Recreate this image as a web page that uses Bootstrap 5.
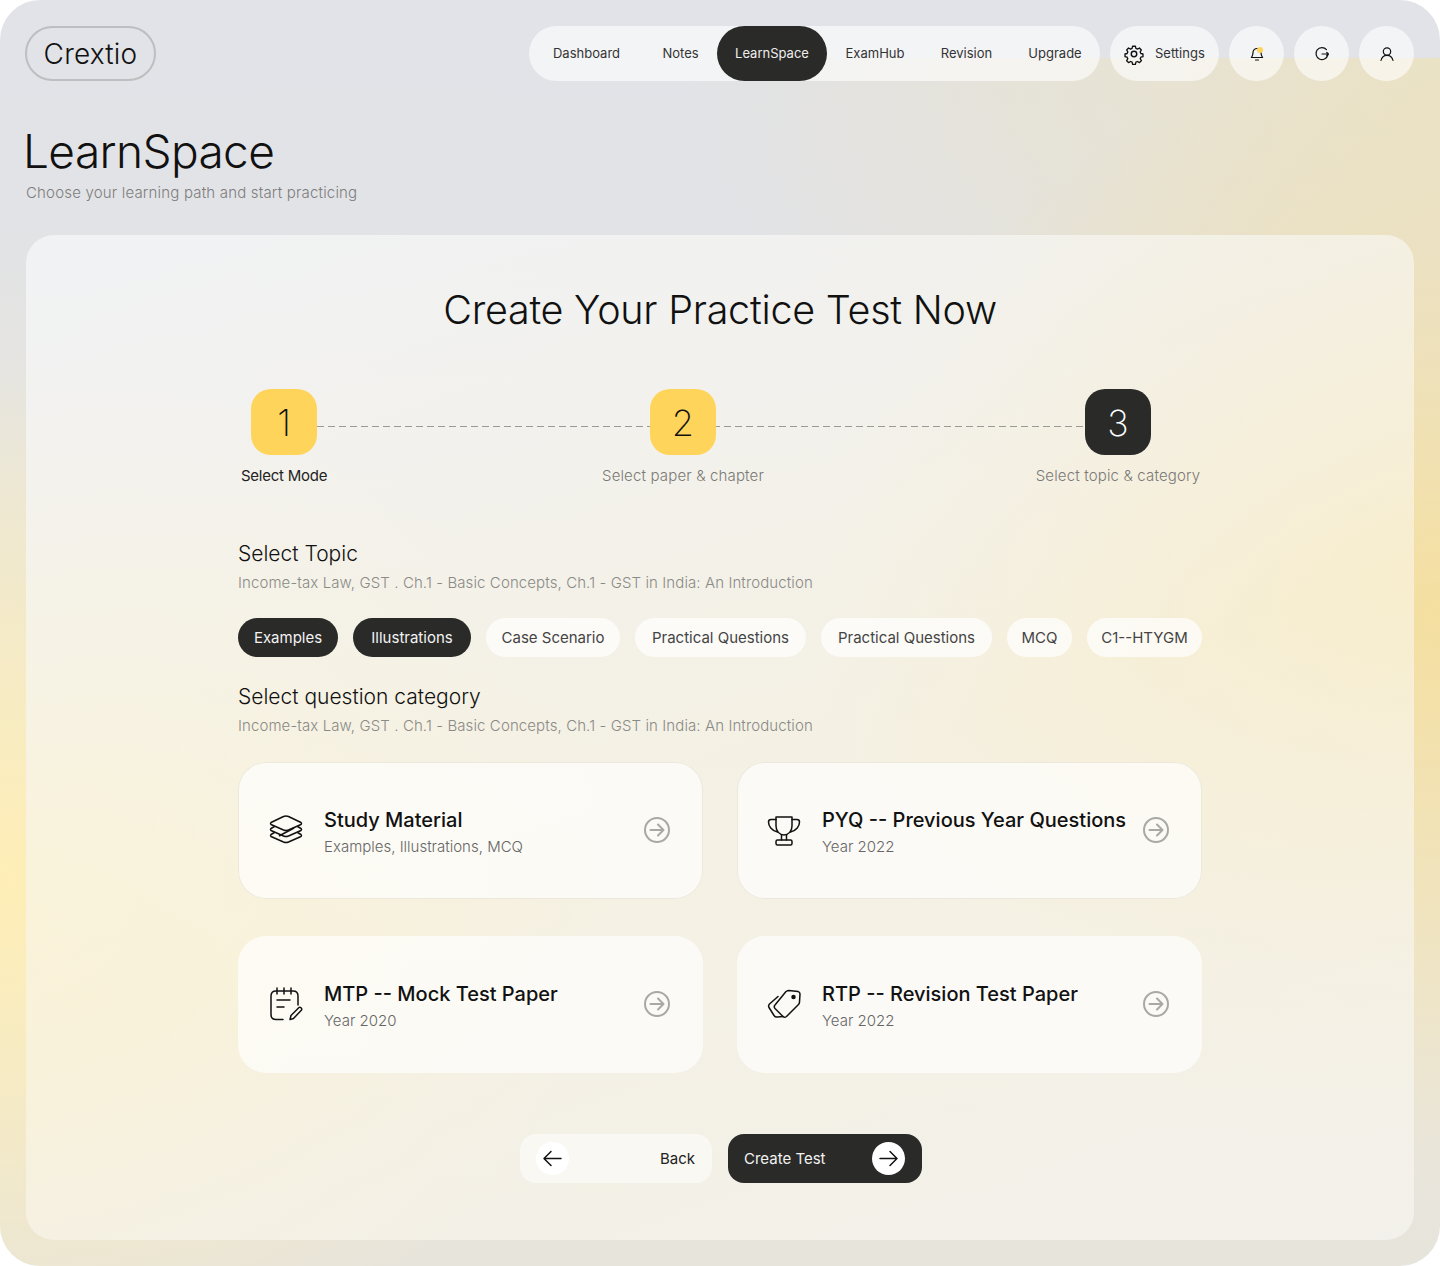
<!DOCTYPE html>
<html lang="en">
<head>
  <meta charset="UTF-8">
  <title>Crextio LearnSpace</title>
  <meta name="viewport" content="width=device-width, initial-scale=1">
  <link href="https://cdn.jsdelivr.net/npm/bootstrap@5.3.3/dist/css/bootstrap.min.css" rel="stylesheet">
  <style>
    body {
      background-color: #fff;
      font-family: "Inter", "Noto Sans", sans-serif;
      color: #111;
    }
    .app-frame {
      position: relative;
      height: 1266px;
      border-radius: 40px;
      overflow: hidden;
      padding: 26px 26px 26px 25px;
      background: linear-gradient(180deg, #e1e3e8 0, #e2e3e6 18%, #e9e6dc 42%, #ece8da 70%, #e7e4dc 100%);
    }
    .app-frame::before {
      content: "";
      position: absolute;
      inset: 58px 0 0 0;
      background:
        radial-gradient(ellipse 620px 560px at 100% 46%, rgba(247, 222, 150, .85) 0, rgba(247, 222, 150, 0) 100%),
        radial-gradient(ellipse 620px 520px at 0 68%, rgba(255, 238, 180, .95) 0, rgba(255, 238, 180, 0) 100%),
        radial-gradient(ellipse 760px 420px at 100% 0, rgba(235, 226, 196, .95) 0, rgba(235, 226, 196, 0) 100%);
    }
    .app-frame > * { position: relative; }
    .top-bar { gap: 10px; }
    .logo-pill {
      width: 131px;
      height: 55px;
      border: 2px solid #bdbebf;
      border-radius: 28px;
      font-size: 28px;
      font-weight: 300;
      letter-spacing: .2px;
    }
    .top-pill {
      height: 55px;
      border-radius: 28px;
      background: rgba(255, 255, 255, .6);
      font-size: 13px;
      color: #333;
    }
    .main-menu { width: 571px; }
    .main-menu a {
      height: 55px;
      border-radius: 28px;
      padding-top: 1px;
      color: #333;
      text-decoration: none;
    }
    .main-menu a:nth-child(1) { width: 115px; }
    .main-menu a:nth-child(2) { width: 73px; }
    .main-menu a:nth-child(3) { width: 110px; background: #2a2a28; color: #eee; }
    .main-menu a:nth-child(4) { width: 96px; }
    .main-menu a:nth-child(5) { width: 87px; }
    .main-menu a:nth-child(6) { width: 90px; }
    .settings-pill { width: 109px; padding-left: 13px; gap: 10px; }
    .round-pill { width: 55px; }
    .bell-dot {
      position: absolute;
      top: 21px;
      left: 28px;
      width: 6px;
      height: 6px;
      border-radius: 50%;
      background: #ffd45a;
    }
    .page-title {
      font-size: 46px;
      font-weight: 300;
      line-height: 56px;
      margin: 42px 0 0 -2px;
      letter-spacing: -.6px;
    }
    .page-sub { font-size: 15px; color: #7d7d7d; margin: 3px 0 0 1px; line-height: 22px; font-weight: 300; letter-spacing: .18px; }
    .practice-panel {
      height: 1005px;
      margin: 31px 0 0 1px;
      border-radius: 28px;
      padding-top: 50px;
      background: linear-gradient(160deg, rgba(244, 245, 247, .85) 0, rgba(250, 246, 232, .62) 55%, rgba(244, 242, 236, .9) 100%);
    }
    .panel-title { font-size: 39.500px; font-weight: 300; line-height: 50px; margin: 0; text-align: center; letter-spacing: -.25px; }
    .panel-body { width: 964px; margin: 0 auto; }
    .stepper { position: relative; margin-top: 54px; padding-left: 3px; }
    .stepper-line {
      position: absolute;
      left: 79px;
      right: 51px;
      top: 37px;
      height: 1px;
      background: repeating-linear-gradient(90deg, #9a9a96 0 7px, transparent 7px 11px);
    }
    .step-item { position: relative; text-align: center; font-size: 15px; color: #7a7a76; font-weight: 300; white-space: nowrap; letter-spacing: .15px; }
    .step-one { width: 86px; color: #222; font-weight: 400; letter-spacing: -.25px; }
    .step-two { width: 162px; margin-left: 275px; }
    .step-three { width: 168px; margin-left: 270px; }
    .step-box {
      width: 66px;
      height: 66px;
      margin: 0 auto 10px;
      padding-top: 2px;
      border-radius: 20px;
      background: #ffd45a;
      color: #111;
      font-size: 36px;
      font-weight: 200;
    }
    .step-three .step-box { background: #2a2a28; color: #fff; }
    .section-title { font-size: 21px; font-weight: 300; line-height: 28px; margin: 0; color: #111; }
    .section-sub { font-size: 15px; font-weight: 300; color: #8a8a86; line-height: 22px; margin: 4px 0 0; letter-spacing: .1px; }
    .topic-title { margin-top: 52px; }
    .chip-row { margin-top: 24px; }
    .topic-chip {
      height: 39px;
      padding-top: 2px;
      border-radius: 20px;
      background: rgba(255, 255, 255, .7);
      color: #444;
      font-size: 15px;
      white-space: nowrap;
    }
    .chip-row .topic-chip:nth-child(1) { width: 100px; }
    .chip-row .topic-chip:nth-child(2) { width: 118px; }
    .chip-row .topic-chip:nth-child(3) { width: 134px; }
    .chip-row .topic-chip:nth-child(4) { width: 171px; }
    .chip-row .topic-chip:nth-child(5) { width: 171px; }
    .chip-row .topic-chip:nth-child(6) { width: 65px; }
    .chip-row .topic-chip:nth-child(7) { width: 115px; }
    .chip-row .chip-on { background: #2a2a28; color: #f3f3f3; }
    .category-title { margin-top: 26px; }
    .category-grid {
      display: grid;
      grid-template-columns: 465px 465px;
      gap: 37px 34px;
      margin-top: 25px;
    }
    .category-card {
      height: 137px;
      border-radius: 28px;
      padding: 0 31px 0 30px;
      background: rgba(255, 255, 255, .66);
    }
    .category-card:nth-child(even) { padding-left: 29px; }
    .card-line { box-shadow: inset 0 0 0 1px #ece8dc; }
    .category-icon { width: 36px; height: 36px; flex: none; margin-right: 20px; }
    .category-text { padding-top: 3px; }
    .category-name { font-size: 20px; font-weight: 500; line-height: 28px; white-space: nowrap; }
    .category-note { font-size: 15px; font-weight: 300; color: #666; line-height: 22px; margin-top: 2px; }
    .go-icon { width: 30px; height: 30px; flex: none; }
    .action-row { margin-top: 61px; gap: 16px; padding-left: 2px; }
    .action-btn {
      height: 49px;
      border-radius: 16px;
      padding: 0 17px 0 16px;
      font-size: 15px;
      text-decoration: none;
    }
    .btn-back { width: 192px; background: rgba(255, 255, 255, .5); color: #222; }
    .btn-next { width: 194px; background: #2a2a28; color: #f2f2f2; }
    .action-btn span:not(.btn-ball) { padding-top: 2px; }
    .btn-ball {
      width: 33px;
      height: 33px;
      border-radius: 50%;
      background: #fff;
    }
  </style>
</head>
<body>
  <div class="app-frame">
    <header class="top-bar d-flex align-items-center">
      <div class="logo-pill d-flex align-items-center justify-content-center">Crextio</div>
      <nav class="top-pill main-menu d-flex align-items-center ms-auto">
        <a href="#" class="d-flex align-items-center justify-content-center">Dashboard</a>
        <a href="#" class="d-flex align-items-center justify-content-center">Notes</a>
        <a href="#" class="d-flex align-items-center justify-content-center">LearnSpace</a>
        <a href="#" class="d-flex align-items-center justify-content-center">ExamHub</a>
        <a href="#" class="d-flex align-items-center justify-content-center">Revision</a>
        <a href="#" class="d-flex align-items-center justify-content-center">Upgrade</a>
      </nav>
      <div class="top-pill settings-pill d-flex align-items-center">
        <svg width="22" height="22" viewBox="0 0 24 24" fill="none" stroke="#111" stroke-width="1.6" stroke-linejoin="round"><circle cx="12" cy="12" r="3"/><path d="M10.300 2.600h3.400l.6 2.700 1.900.8 2.400-1.400 2.300 2.400-1.400 2.400.8 1.900 2.600.6v3.200l-2.600.7-.8 1.800 1.400 2.400-2.300 2.400-2.400-1.400-1.900.8-.6 2.600h-3.400l-.6-2.600-1.900-.8-2.400 1.400-2.300-2.400 1.400-2.400-.8-1.800-2.600-.7v-3.200l2.600-.6.8-1.900-1.400-2.400 2.300-2.400 2.400 1.400 1.900-.8z" transform="translate(1.200 1.200) scale(.9)"/></svg>
        <span>Settings</span>
      </div>
      <div class="top-pill round-pill position-relative d-flex align-items-center justify-content-center">
        <svg width="16" height="16" viewBox="0 0 16 16" fill="none" stroke="#111" stroke-width="1.2" stroke-linecap="round" stroke-linejoin="round"><path d="M4 6.500a4 4 0 0 1 8 0c0 3 1 4 1.600 5H2.400c.6-1 1.600-2 1.600-5z"/><path d="M6.500 14h3"/></svg>
        <span class="bell-dot"></span>
      </div>
      <div class="top-pill round-pill d-flex align-items-center justify-content-center">
        <svg width="16" height="16" viewBox="0 0 16 16" fill="none" stroke="#111" stroke-width="1.2" stroke-linecap="round" stroke-linejoin="round"><path d="M12.500 3.600A6 6 0 1 0 13.800 9"/><path d="M8 8h6.500M12.800 6.500 14.500 8l-1.700 1.500"/></svg>
      </div>
      <div class="top-pill round-pill d-flex align-items-center justify-content-center">
        <svg width="16" height="16" viewBox="0 0 16 16" fill="none" stroke="#111" stroke-width="1.2" stroke-linecap="round"><circle cx="8" cy="5.500" r="3.700"/><path d="M2 14.500c.6-3 3-5.200 6-5.200s5.400 2.200 6 5.200"/></svg>
      </div>
    </header>

    <h1 class="page-title">LearnSpace</h1>
    <p class="page-sub">Choose your learning path and start practicing</p>

    <main class="practice-panel">
      <h2 class="panel-title">Create Your Practice Test Now</h2>
      <div class="panel-body">
        <div class="stepper d-flex">
          <div class="stepper-line"></div>
          <div class="step-item step-one">
            <div class="step-box d-flex align-items-center justify-content-center">1</div>
            Select Mode
          </div>
          <div class="step-item step-two">
            <div class="step-box d-flex align-items-center justify-content-center">2</div>
            Select paper &amp; chapter
          </div>
          <div class="step-item step-three">
            <div class="step-box d-flex align-items-center justify-content-center">3</div>
            Select topic &amp; category
          </div>
        </div>

        <h3 class="section-title topic-title">Select Topic</h3>
        <p class="section-sub">Income-tax Law, GST . Ch.1 - Basic Concepts, Ch.1 - GST in India: An Introduction</p>
        <div class="chip-row d-flex justify-content-between">
          <span class="topic-chip chip-on d-flex align-items-center justify-content-center">Examples</span>
          <span class="topic-chip chip-on d-flex align-items-center justify-content-center">Illustrations</span>
          <span class="topic-chip d-flex align-items-center justify-content-center">Case Scenario</span>
          <span class="topic-chip d-flex align-items-center justify-content-center">Practical Questions</span>
          <span class="topic-chip d-flex align-items-center justify-content-center">Practical Questions</span>
          <span class="topic-chip d-flex align-items-center justify-content-center">MCQ</span>
          <span class="topic-chip d-flex align-items-center justify-content-center">C1--HTYGM</span>
        </div>

        <h3 class="section-title category-title">Select question category</h3>
        <p class="section-sub">Income-tax Law, GST . Ch.1 - Basic Concepts, Ch.1 - GST in India: An Introduction</p>

        <div class="category-grid">
          <div class="category-card card-line d-flex align-items-center">
            <svg class="category-icon" viewBox="0 0 36 36" fill="none" stroke="#111" stroke-width="1.500" stroke-linejoin="round"><path d="M3 10.500 15.500 4.500q2.500-1 5 0L33 10.500q1 1 0 2L20.500 18q-2.500 1-5 0L3 12.500q-1-1 0-2z"/><path d="M6.500 14.500 3 16.500q-1 1 0 2L15.500 24q2.500 1 5 0L33 18.500q1-1 0-2l-3.500-2"/><path d="M6.500 20.500 3 22.500q-1 1 0 2L15.500 30q2.500 1 5 0L33 24.500q1-1 0-2l-3.500-2"/><path d="M11 24 26 16"/></svg>
            <div class="category-text flex-grow-1">
              <div class="category-name">Study Material</div>
              <div class="category-note">Examples, Illustrations, MCQ</div>
            </div>
            <svg class="go-icon" viewBox="0 0 30 30" fill="none" stroke="#a8a8a4" stroke-width="2" stroke-linecap="round" stroke-linejoin="round"><circle cx="15" cy="15" r="12"/><path d="M8.500 15h13M16 9.500l5.500 5.500-5.500 5.500"/></svg>
          </div>
          <div class="category-card card-line d-flex align-items-center">
            <svg class="category-icon" viewBox="0 0 36 36" fill="none" stroke="#111" stroke-width="1.500" stroke-linecap="round" stroke-linejoin="round"><path d="M10 5h16v9c0 5-3.500 9-8 9s-8-4-8-9z"/><path d="M10 7.500H5c-2 0-2.500 1-2.500 2.500 0 4 3 8.500 9 10"/><path d="M26 7.500h5c2 0 2.500 1 2.500 2.500 0 4-3 8.500-9 10"/><path d="M15.500 23v5M20.500 23v5"/><rect x="10" y="28" width="16" height="5" rx="1.500"/></svg>
            <div class="category-text flex-grow-1">
              <div class="category-name">PYQ -- Previous Year Questions</div>
              <div class="category-note">Year 2022</div>
            </div>
            <svg class="go-icon" viewBox="0 0 30 30" fill="none" stroke="#a8a8a4" stroke-width="2" stroke-linecap="round" stroke-linejoin="round"><circle cx="15" cy="15" r="12"/><path d="M8.500 15h13M16 9.500l5.500 5.500-5.500 5.500"/></svg>
          </div>
          <div class="category-card d-flex align-items-center">
            <svg class="category-icon" viewBox="0 0 36 36" fill="none" stroke="#111" stroke-width="1.500" stroke-linecap="round" stroke-linejoin="round"><path d="M15 33.500H8c-3 0-5-2-5-5V10c0-3 2-5 5-5h17c3 0 5 2 5 5v9"/><path d="M9 2v6M16 2v6M23 2v6"/><path d="M9 14h13M9 21h7"/><path d="m22 33.500 1-4 8-8c1-1 3.500 1 2.500 2.500l-8 8.500z"/></svg>
            <div class="category-text flex-grow-1">
              <div class="category-name">MTP -- Mock Test Paper</div>
              <div class="category-note">Year 2020</div>
            </div>
            <svg class="go-icon" viewBox="0 0 30 30" fill="none" stroke="#a8a8a4" stroke-width="2" stroke-linecap="round" stroke-linejoin="round"><circle cx="15" cy="15" r="12"/><path d="M8.500 15h13M16 9.500l5.500 5.500-5.500 5.500"/></svg>
          </div>
          <div class="category-card d-flex align-items-center">
            <svg class="category-icon" viewBox="0 0 36 36" fill="none" stroke="#111" stroke-width="1.500" stroke-linecap="round" stroke-linejoin="round"><path d="M20 5.500q1.500-1 3-1l9 1q2 .5 2 2.500l-.5 8q0 1.500-1 2.500l-12 12q-2 1.500-3.500 0l-8-8q-1.500-2 0-3.500z"/><circle cx="27.500" cy="11" r="1.500" fill="#111"/><path d="M12 10.500 3.500 18q-1.500 1.500-.5 3.500l5 8q1.500 2 3.500 1.500l5.500-.5"/></svg>
            <div class="category-text flex-grow-1">
              <div class="category-name">RTP -- Revision Test Paper</div>
              <div class="category-note">Year 2022</div>
            </div>
            <svg class="go-icon" viewBox="0 0 30 30" fill="none" stroke="#a8a8a4" stroke-width="2" stroke-linecap="round" stroke-linejoin="round"><circle cx="15" cy="15" r="12"/><path d="M8.500 15h13M16 9.500l5.500 5.500-5.500 5.500"/></svg>
          </div>
        </div>

        <div class="action-row d-flex justify-content-center">
          <a href="#" class="action-btn btn-back d-flex align-items-center justify-content-between">
            <span class="btn-ball d-flex align-items-center justify-content-center">
              <svg width="21" height="21" viewBox="0 0 21 21" fill="none" stroke="#111" stroke-width="1.500" stroke-linecap="round" stroke-linejoin="round"><path d="M19 10.500H2M9 3.500l-7 7 7 7"/></svg>
            </span>
            <span>Back</span>
          </a>
          <a href="#" class="action-btn btn-next d-flex align-items-center justify-content-between">
            <span>Create Test</span>
            <span class="btn-ball d-flex align-items-center justify-content-center">
              <svg width="21" height="21" viewBox="0 0 21 21" fill="none" stroke="#111" stroke-width="1.500" stroke-linecap="round" stroke-linejoin="round"><path d="M2 10.500h17M12 3.500l7 7-7 7"/></svg>
            </span>
          </a>
        </div>
      </div>
    </main>
  </div>
  <script src="https://cdn.jsdelivr.net/npm/bootstrap@5.3.3/dist/js/bootstrap.bundle.min.js"></script>
</body>
</html>
